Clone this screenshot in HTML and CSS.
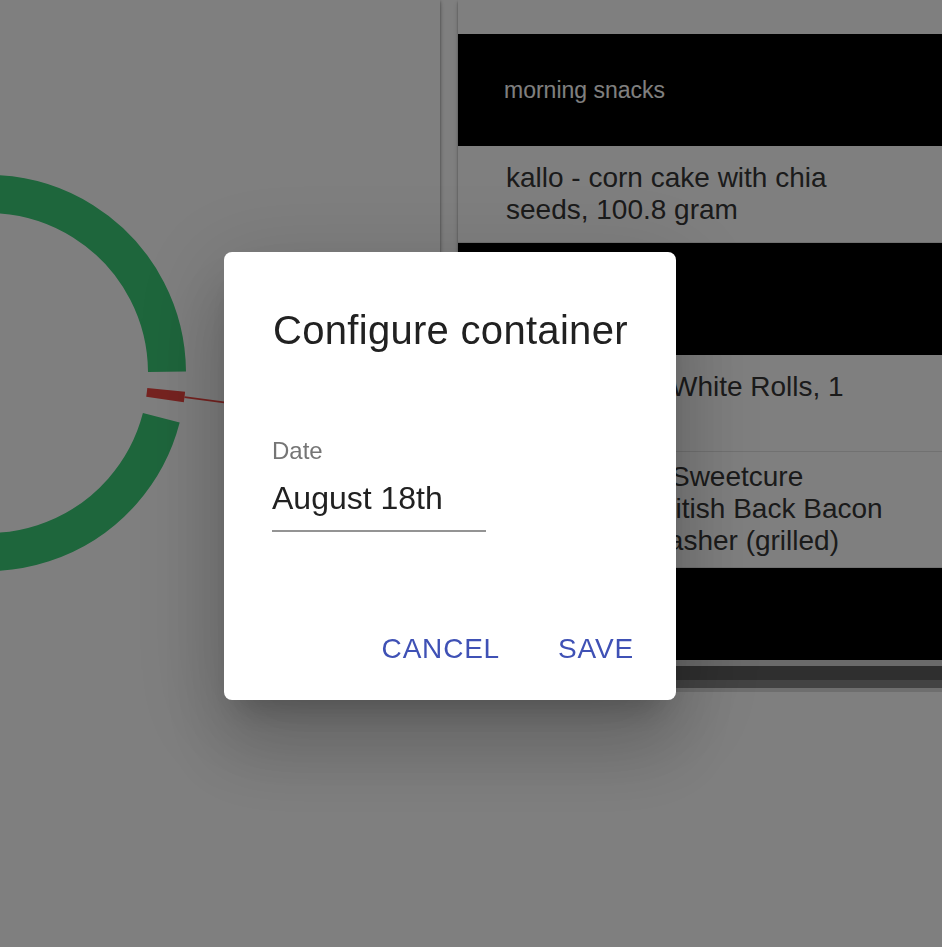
FILE: index.html
```html
<!DOCTYPE html>
<html lang="en">
<head>
<meta charset="utf-8">
<title>Configure container</title>
<link rel="stylesheet" href="styles.css">
</head>
<body>
<div class="page">
  <section class="card chart-card">
    <svg class="donut" width="440" height="692" viewBox="0 0 440 692" aria-hidden="true">
      <path class="slice-green" d="M161.3 417.8 A179 179 0 1 1 167 371.75"/>
      <path class="slice-red" d="M166.2 389.85 A179 179 0 0 1 165.03 399.46"/>
      <path class="label-line" d="M184.5 397.1 L270 408.5"/>
    </svg>
  </section>
  <section class="card list-card">
    <div class="list">
      <div class="item item-tail"></div>
      <div class="group-header">morning snacks</div>
      <div class="item"><span>kallo - corn cake with chia<br>seeds, 100.8 gram</span></div>
      <div class="group-header"></div>
      <div class="item"><span>Tesco Finest White Rolls, 1<br>roll</span></div>
      <div class="item"><span>Tesco Finest Sweetcure<br>Unsmoked British Back Bacon<br>Rashers - 1 rasher (grilled)</span></div>
      <div class="group-header"></div>
    </div>
    <div class="scrollbar">
      <div class="scroll-edge"></div>
      <div class="scroll-thumb"></div>
      <div class="scroll-track"></div>
      <div class="scroll-foot"></div>
    </div>
  </section>
</div>

<div class="backdrop"></div>
<div class="dialog-wrap">
  <div class="dialog" role="dialog" aria-labelledby="dlg-title">
    <h2 class="dialog-title" id="dlg-title">Configure container</h2>
    <div class="dialog-content">
      <label class="field-label" for="date">Date</label>
      <div class="field-input" id="date">August 18th</div>
    </div>
    <div class="dialog-actions">
      <button class="btn" type="button">Cancel</button>
      <button class="btn" type="button">Save</button>
    </div>
  </div>
</div>
</body>
</html>
```

FILE: styles.css
```css
* { box-sizing: border-box; }

html, body {
  margin: 0;
  padding: 0;
  background: #ffffff;
  font-family: "Liberation Sans", Arial, Helvetica, sans-serif;
  overflow: hidden;
}

.page {
  display: grid;
  grid-template-columns: 440px 1fr;
  column-gap: 18px;
  height: 692px;
}

.card {
  background: #ffffff;
  height: 692px;
  box-shadow:
    0 2px 2px rgba(0, 0, 0, 0.28),
    0 3px 6px rgba(0, 0, 0, 0.16),
    1px 0 3px rgba(0, 0, 0, 0.14);
}

.chart-card {
  overflow: hidden;
}

.donut {
  display: block;
}

.slice-green {
  fill: none;
  stroke: #3ccc78;
  stroke-width: 38;
}

.slice-red {
  fill: none;
  stroke: #ec4640;
  stroke-width: 38;
}

.label-line {
  fill: none;
  stroke: #ec4640;
  stroke-width: 1.6;
}

.list-card {
  display: flex;
  flex-direction: column;
}

.list {
  height: 660px;
  overflow: hidden;
}

.item {
  display: flex;
  align-items: center;
  min-height: 97px;
  padding: 9px 40px 10px 48px;
  border-bottom: 1px solid #e2e2e2;
  font-size: 28px;
  line-height: 32px;
  color: #363636;
  background: #ffffff;
}

.item-tail {
  min-height: 34px;
  height: 34px;
  padding: 0;
  border-bottom: none;
}

.group-header {
  display: flex;
  align-items: center;
  height: 112px;
  padding-left: 46px;
  background: #000000;
  color: #ffffff;
  font-size: 23px;
}

.scrollbar {
  display: flex;
  flex-direction: column;
  height: 32px;
}
.scroll-edge { height: 6px; background: #d4d4d4; }
.scroll-thumb { height: 14px; background: #5e5e5e; }
.scroll-track { height: 8px; background: #868686; }
.scroll-foot { height: 4px; background: #dcdcdc; }

.backdrop {
  position: fixed;
  inset: 0;
  background: rgba(0, 0, 0, 0.5);
}

.dialog-wrap {
  position: fixed;
  inset: 0;
  display: flex;
  align-items: center;
  justify-content: center;
  padding: 4px 42px 0 0;
}

.dialog {
  width: 452px;
  background: #ffffff;
  border-radius: 8px;
  box-shadow:
    0 22px 30px -14px rgba(0, 0, 0, 0.2),
    0 48px 76px 6px rgba(0, 0, 0, 0.14),
    0 18px 92px 16px rgba(0, 0, 0, 0.12);
}

.dialog-title {
  margin: 0;
  padding: 54px 48px 0 49px;
  font-size: 40px;
  line-height: 48px;
  font-weight: 400;
  letter-spacing: 0.3px;
  color: #212121;
}

.dialog-content {
  display: flex;
  flex-direction: column;
  padding: 83px 48px 0;
}

.field-label {
  font-size: 24px;
  line-height: 28px;
  color: #757575;
}

.field-input {
  width: 214px;
  margin-top: 14px;
  padding-bottom: 13px;
  font-size: 32px;
  line-height: 38px;
  color: #212121;
  border-bottom: 2px solid #949494;
}

.dialog-actions {
  display: flex;
  justify-content: flex-end;
  gap: 16px;
  padding: 82px 16px 17px;
}

.btn {
  min-width: 128px;
  padding: 12px 16px;
  border: none;
  background: transparent;
  font-family: inherit;
  font-size: 28px;
  line-height: 45px;
  letter-spacing: 0.8px;
  text-transform: uppercase;
  color: #3f51b5;
  cursor: pointer;
}
```
